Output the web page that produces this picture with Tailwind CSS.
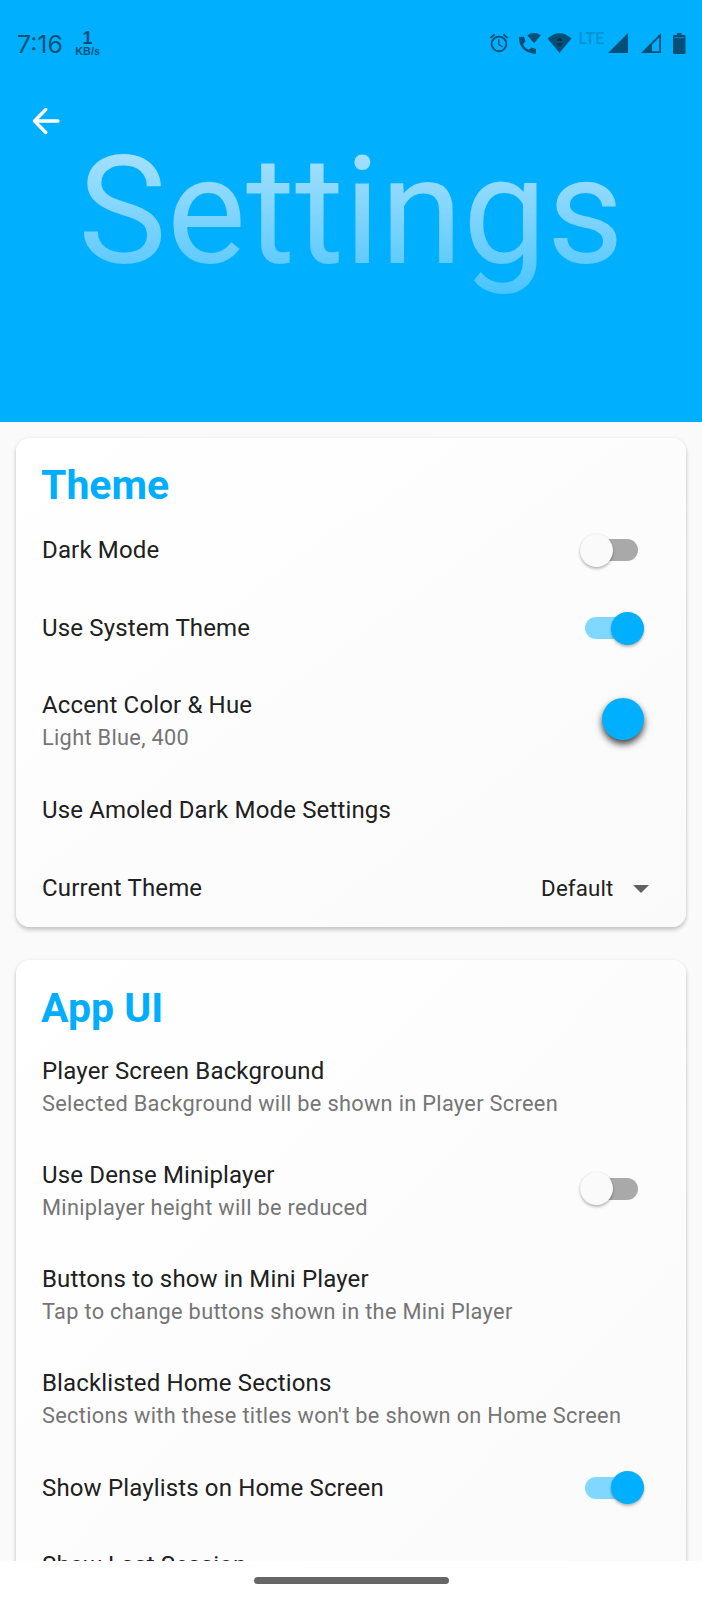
<!DOCTYPE html>
<html lang="en">
<head>
<meta charset="utf-8">
<meta name="viewport" content="width=device-width, initial-scale=1">
<title>Settings</title>
<script src="https://cdn.jsdelivr.net/npm/@tailwindcss/browser@4"></script>
</head>
<body class="h-[1600px] w-[702px] overflow-hidden bg-white font-['Roboto',sans-serif] text-[#202020]">
<div class="flex h-[1600px] flex-col">

  <main class="h-[1560.5px] overflow-hidden bg-[#fafafa]">
    <header class="flex h-[421.5px] flex-col bg-[#00b0ff]">
      <!-- Status bar -->
      <div class="flex h-[86px] items-center justify-between pr-[16.5px] pl-[17px] text-[#065078]">
        <div class="flex items-center gap-[12.500px]">
          <span class="pt-[2px] font-['Inter',sans-serif] text-[24.8px] leading-none">7:16</span>
          <div class="flex flex-col items-center pt-px font-['Liberation_Sans',sans-serif] font-bold">
            <span class="text-[18px] leading-[15px]">1</span>
            <span class="text-[10.8px] leading-[11px]">KB/s</span>
          </div>
        </div>
        <div class="flex items-center">
          <svg class="h-[22px] w-[22px]" viewBox="0 0 24 24" fill="currentColor"><path d="M22 5.72l-4.6-3.86-1.29 1.53 4.6 3.86L22 5.72zM7.88 3.39L6.6 1.86 2 5.71l1.29 1.53 4.59-3.85zM12.5 8H11v6l4.75 2.85.75-1.23-4-2.37V8zM12 4a9 9 0 1 0 .001 18.001A9 9 0 0 0 12 4zm0 16a7 7 0 1 1 0-14 7 7 0 0 1 0 14z"/></svg>
          <svg class="ml-[8px] h-[23px] w-[24px]" viewBox="0 0 24 23" fill="currentColor"><path d="M1 6.2C1 15.2 8 21.700 18 21.700v-4.800l-4.600-1.500-2.500 2.400C7.800 16.200 6.400 14.700 5 11.900l2.500-2.500L6 4.700H2.200C1.500 4.700 1 5.400 1 6.200z"/><path d="M9.300 3.200Q16-1.300 22.900 3.200L16 11.200z"/></svg>
          <svg class="ml-[5px] h-[22px] w-[25px]" viewBox="0 0 26 22" fill="currentColor"><path d="M.6 6.200Q13-4.600 25.400 6.200L13 21.400z"/><path d="M13 4.700l3.600 4.200H9.400zM13 15.200l3.600-4.200H9.400z" fill="#003450"/></svg>
          <span class="ml-[7px] h-[24px] w-[26px] text-[16.200px] leading-[16px] font-medium text-[#0593d4]">LTE</span>
          <svg class="ml-[3px] h-[20px] w-[20px]" viewBox="0 0 20 20" fill="currentColor"><path d="M20 0v20H0z"/></svg>
          <svg class="ml-[13px] h-[20px] w-[20px]" viewBox="0 0 20 20" fill="currentColor"><path fill-rule="evenodd" d="M20 0v20H0zM18.200 4.500L11 11.700V18.200h7.200z"/></svg>
          <svg class="ml-[12.500px] h-[21px] w-[12.500px]" viewBox="0 0 12.500 21" fill="currentColor"><path d="M4 0h4.500v2h2.800c.7 0 1.200.5 1.200 1.200v16.600c0 .7-.5 1.200-1.200 1.200H1.200C.5 21 0 20.500 0 19.800V3.200C0 2.500.5 2 1.200 2H4z"/><path d="M1.500 4.600h9.500" stroke="#0a8ac8" stroke-width="1"/></svg>
        </div>
      </div>
      <button class="mt-[18.800px] ml-[28.500px] h-[32px] w-[33px]" aria-label="Back">
        <svg class="h-[32px] w-[33px]" viewBox="0 0 33 32" fill="none" stroke="#fff" stroke-width="3.300" stroke-linecap="round" stroke-linejoin="round"><path d="M16.800 4.500L5.500 16l11.300 11.500M6 16h23"/></svg>
      </button>
      <h1 class="-mt-[13.300px] bg-linear-to-b from-[#b3e5fc] to-[#40c4ff] bg-clip-text text-center text-[149.500px] leading-[176px] font-normal text-transparent">Settings</h1>
    </header>

    <div class="flex flex-col gap-[32.500px] px-[16px] pt-[16.500px]">
      <!-- Theme -->
      <section class="h-[489.300px] rounded-[14px] bg-linear-to-br from-white to-[#fafafa] pr-[42.500px] pl-[26px] shadow-[0_3px_4px_rgba(0,0,0,0.2),0_0_4px_rgba(0,0,0,0.06)]">
        <h2 class="-ml-px h-[73px] pt-[23px] text-[41px] leading-[48px] font-bold text-[#00adff]">Theme</h2>
        <div class="flex h-[78px] items-center justify-between">
          <span class="text-[24px] tracking-[0.150px]">Dark Mode</span>
          <div class="mr-[5.500px] flex h-[22.500px] w-[53.500px] items-center rounded-full bg-[#a9a9a9]"><div class="-ml-[5px] h-[33px] w-[33px] shrink-0 rounded-full bg-[#fafafa] shadow-[0_2px_3px_rgba(0,0,0,0.25),0_0_2px_rgba(0,0,0,0.1)]"></div></div>
        </div>
        <div class="flex h-[78px] items-center justify-between">
          <span class="text-[24px] tracking-[0.150px]">Use System Theme</span>
          <div class="flex h-[22.500px] w-[59px] items-center justify-end rounded-full bg-[#80d7ff]"><div class="h-[33px] w-[33px] shrink-0 rounded-full bg-[#00b0ff] shadow-[0_2px_3px_rgba(0,0,0,0.25),0_0_2px_rgba(0,0,0,0.1)]"></div></div>
        </div>
        <div class="flex h-[104px] items-center justify-between">
          <div class="flex flex-col pt-[5px]">
            <span class="text-[24px] leading-[33px] tracking-[0.150px]">Accent Color &amp; Hue</span>
            <span class="text-[21.750px] leading-[32px] tracking-[0.310px] text-[#757575]">Light Blue, 400</span>
          </div>
          <div class="h-[41.500px] w-[41.500px] rounded-full bg-[#00b0ff] shadow-[0_4px_7px_rgba(0,0,0,0.75)]"></div>
        </div>
        <div class="flex h-[78px] items-center">
          <span class="text-[24px] tracking-[0.150px]">Use Amoled Dark Mode Settings</span>
        </div>
        <div class="flex h-[78px] items-center justify-between">
          <span class="text-[24px] tracking-[0.150px]">Current Theme</span>
          <div class="-mr-[5px] flex items-center gap-[19px]">
            <span class="pt-[2px] text-[22.300px] tracking-[0.150px]">Default</span>
            <svg class="mt-px h-[8px] w-[16px]" viewBox="0 0 16 8" fill="#606060"><path d="M0 0h16L8 8z"/></svg>
          </div>
        </div>
      </section>

      <!-- App UI -->
      <section class="h-[700px] rounded-[14px] bg-linear-to-br from-white to-[#fafafa] pr-[42.500px] pl-[26px] shadow-[0_3px_4px_rgba(0,0,0,0.2),0_0_4px_rgba(0,0,0,0.06)]">
        <h2 class="-ml-px h-[73px] pt-[24px] text-[41px] leading-[48px] font-bold text-[#00adff]">App UI</h2>
        <div class="flex h-[104px] items-center">
          <div class="flex flex-col pt-[5px]">
            <span class="text-[24px] leading-[33px] tracking-[0.150px]">Player Screen Background</span>
            <span class="text-[21.750px] leading-[32px] tracking-[0.310px] text-[#757575]">Selected Background will be shown in Player Screen</span>
          </div>
        </div>
        <div class="flex h-[104px] items-center justify-between">
          <div class="flex flex-col pt-[5px]">
            <span class="text-[24px] leading-[33px] tracking-[0.150px]">Use Dense Miniplayer</span>
            <span class="text-[21.750px] leading-[32px] tracking-[0.310px] text-[#757575]">Miniplayer height will be reduced</span>
          </div>
          <div class="mr-[5.500px] flex h-[22.500px] w-[53.500px] items-center rounded-full bg-[#a9a9a9]"><div class="-ml-[5px] h-[33px] w-[33px] shrink-0 rounded-full bg-[#fafafa] shadow-[0_2px_3px_rgba(0,0,0,0.25),0_0_2px_rgba(0,0,0,0.1)]"></div></div>
        </div>
        <div class="flex h-[104px] items-center">
          <div class="flex flex-col pt-[5px]">
            <span class="text-[24px] leading-[33px] tracking-[0.150px]">Buttons to show in Mini Player</span>
            <span class="text-[21.750px] leading-[32px] tracking-[0.310px] text-[#757575]">Tap to change buttons shown in the Mini Player</span>
          </div>
        </div>
        <div class="flex h-[104px] items-center">
          <div class="flex flex-col pt-[5px]">
            <span class="text-[24px] leading-[33px] tracking-[0.150px]">Blacklisted Home Sections</span>
            <span class="text-[21.750px] leading-[32px] tracking-[0.310px] whitespace-nowrap text-[#757575]">Sections with these titles won't be shown on Home Screen</span>
          </div>
        </div>
        <div class="flex h-[78px] items-center justify-between">
          <span class="text-[24px] tracking-[0.150px]">Show Playlists on Home Screen</span>
          <div class="flex h-[22.500px] w-[59px] items-center justify-end rounded-full bg-[#80d7ff]"><div class="h-[33px] w-[33px] shrink-0 rounded-full bg-[#00b0ff] shadow-[0_2px_3px_rgba(0,0,0,0.25),0_0_2px_rgba(0,0,0,0.1)]"></div></div>
        </div>
        <div class="flex h-[76px] items-center">
          <span class="text-[24px] tracking-[0.150px]">Show Last Session</span>
        </div>
      </section>
    </div>
  </main>

  <nav class="flex flex-1 justify-center bg-white pt-[16.500px]">
    <div class="h-[6.500px] w-[195px] rounded-full bg-[#666]"></div>
  </nav>
</div>
</body>
</html>
